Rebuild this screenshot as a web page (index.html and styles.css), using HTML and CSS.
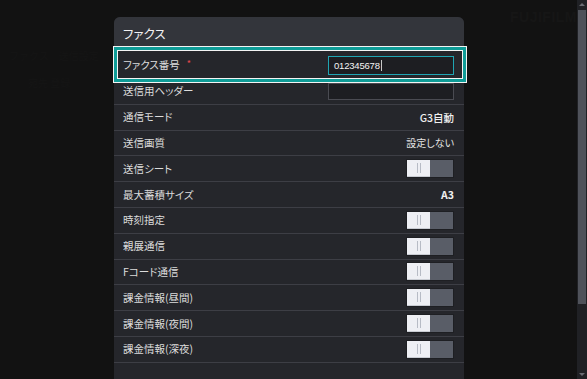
FILE: index.html
```html
<!DOCTYPE html>
<html lang="ja">
<head>
<meta charset="utf-8">
<link rel="stylesheet" href="styles.css">
</head>
<body>
<div class="page">
  <div class="bg-left">
    <div class="ghost g1">ファクス　送信設定</div>
    <div class="ghost g2">宛先 登録</div>
  </div>
  <section class="panel">
    <header class="panel-head">ファクス</header>
    <div class="panel-body">
      <div class="row focus">
        <span class="label">ファクス番号<span class="req">*</span></span>
        <div class="input on"><span class="val">012345678</span><span class="caret"></span></div>
      </div>
      <div class="row">
        <span class="label">送信用ヘッダー</span>
        <div class="input"></div>
      </div>
      <div class="row"><span class="label">通信モード</span><span class="value mid">G3自動</span></div>
      <div class="row"><span class="label">送信画質</span><span class="value light">設定しない</span></div>
      <div class="row"><span class="label">送信シート</span><span class="toggle"><span class="knob"><i></i><i></i></span><span class="track"></span></span></div>
      <div class="row"><span class="label">最大蓄積サイズ</span><span class="value">A3</span></div>
      <div class="row"><span class="label">時刻指定</span><span class="toggle"><span class="knob"><i></i><i></i></span><span class="track"></span></span></div>
      <div class="row"><span class="label">親展通信</span><span class="toggle"><span class="knob"><i></i><i></i></span><span class="track"></span></span></div>
      <div class="row"><span class="label">Fコード通信</span><span class="toggle"><span class="knob"><i></i><i></i></span><span class="track"></span></span></div>
      <div class="row"><span class="label">課金情報(昼間)</span><span class="toggle"><span class="knob"><i></i><i></i></span><span class="track"></span></span></div>
      <div class="row"><span class="label">課金情報(夜間)</span><span class="toggle"><span class="knob"><i></i><i></i></span><span class="track"></span></span></div>
      <div class="row"><span class="label">課金情報(深夜)</span><span class="toggle"><span class="knob"><i></i><i></i></span><span class="track"></span></span></div>
    </div>
  </section>
  <div class="bg-right">
    <div class="logo">FUJIFILM</div>
  </div>
  <div class="scrollbar">
    <span class="arrow up"></span>
    <span class="thumb"></span>
    <span class="rest"></span>
    <span class="arrow down"></span>
  </div>
</div>
</body>
</html>
```

FILE: styles.css
```css
html, body {
  margin: 0;
  padding: 0;
  background: #121212;
  height: 100%;
  overflow: hidden;
}
body {
  font-family: "Noto Sans CJK JP", "Noto Sans", sans-serif;
  color: #dcdcdc;
}
.page {
  display: grid;
  grid-template-columns: 114px 350px 1fr 10px;
  height: 379px;
}
.bg-left {
  padding-top: 48px;
  overflow: hidden;
}
.ghost {
  color: #151515;
  font-size: 10px;
  white-space: nowrap;
}
.g1 { padding-left: 9px; }
.g2 { padding-left: 28px; margin-top: 12px; }
.bg-right {
  overflow: hidden;
  padding: 9px 0 0 46px;
}
.logo {
  color: #161616;
  font-family: "Liberation Sans", sans-serif;
  font-weight: 700;
  font-size: 14px;
  letter-spacing: 0.5px;
}
.panel {
  margin-top: 17px;
  background: #25262b;
  border-radius: 6px 6px 0 0;
  display: flex;
  flex-direction: column;
}
.panel-head {
  height: 30px;
  box-sizing: border-box;
  background: #33353b;
  border-radius: 6px 6px 0 0;
  padding: 9px 0 0 9px;
  font-size: 12.5px;
  color: #f2f2f2;
  font-feature-settings: "palt";
  line-height: 16px;
}
.panel-body {
  padding-top: 5px;
}
.row {
  position: relative;
  height: 25.8px;
  box-sizing: border-box;
  border-bottom: 1px solid #3d3e45;
  display: flex;
  align-items: center;
  justify-content: space-between;
  padding: 0 10px 0 9px;
}
.row.focus {
  height: 27px;
}
.row.focus::after {
  content: "";
  position: absolute;
  top: -6px;
  bottom: -5px;
  left: -1px;
  right: -3px;
  border: 1px solid #f4f4f4;
  box-shadow: inset 0 0 0 3px #0f9c97, inset 0 0 0 4px #f4f4f4;
  pointer-events: none;
}
.label {
  font-size: 10.5px;
  font-feature-settings: "palt";
  color: #dcdcdc;
  line-height: 14px;
}
.req {
  color: #e5484d;
  font-size: 9px;
  margin-left: 7px;
  position: relative;
  top: -2px;
}
.value {
  font-size: 10.5px;
  font-weight: 700;
  color: #f0f0f0;
  font-feature-settings: "palt";
}
.value.mid {
  font-weight: 500;
  font-size: 10.5px;
}
.value.light {
  font-weight: 400;
  font-size: 10px;
  color: #e4e4e4;
}
.input {
  width: 126px;
  height: 17px;
  box-sizing: border-box;
  border: 1px solid #4a4b52;
  background: #1d1e22;
  display: flex;
  align-items: center;
  padding-left: 5px;
}
.input.on {
  height: 19px;
  border-color: #1fa5b3;
}
.val {
  font-family: "Liberation Sans", sans-serif;
  font-size: 9.5px;
  color: #f4f4f4;
  letter-spacing: -0.2px;
}
.caret {
  width: 1px;
  height: 11px;
  background: #c8c8c8;
  margin-left: 1px;
}
.toggle {
  width: 48px;
  height: 19px;
  box-sizing: border-box;
  border: 1px solid #1e1f23;
  display: flex;
}
.knob {
  flex: 1;
  background: #eeeff4;
  display: flex;
  align-items: center;
  justify-content: center;
  gap: 2px;
  border-bottom: 1px solid #c9ccd3;
}
.knob i {
  width: 1px;
  height: 10px;
  background: #b7bbc5;
}
.track {
  flex: 1;
  background: #595d67;
}
.scrollbar {
  background: #202125;
  display: flex;
  flex-direction: column;
  align-items: center;
}
.arrow {
  width: 0;
  height: 0;
  border-left: 3px solid transparent;
  border-right: 3px solid transparent;
  margin: 3px 0;
}
.arrow.up {
  border-bottom: 3px solid #6a6c73;
}
.arrow.down {
  border-top: 3px solid #6a6c73;
}
.thumb {
  width: 8px;
  height: 294px;
  background: #4f525a;
  margin-top: 1px;
}
.rest {
  flex: 1;
}
```
